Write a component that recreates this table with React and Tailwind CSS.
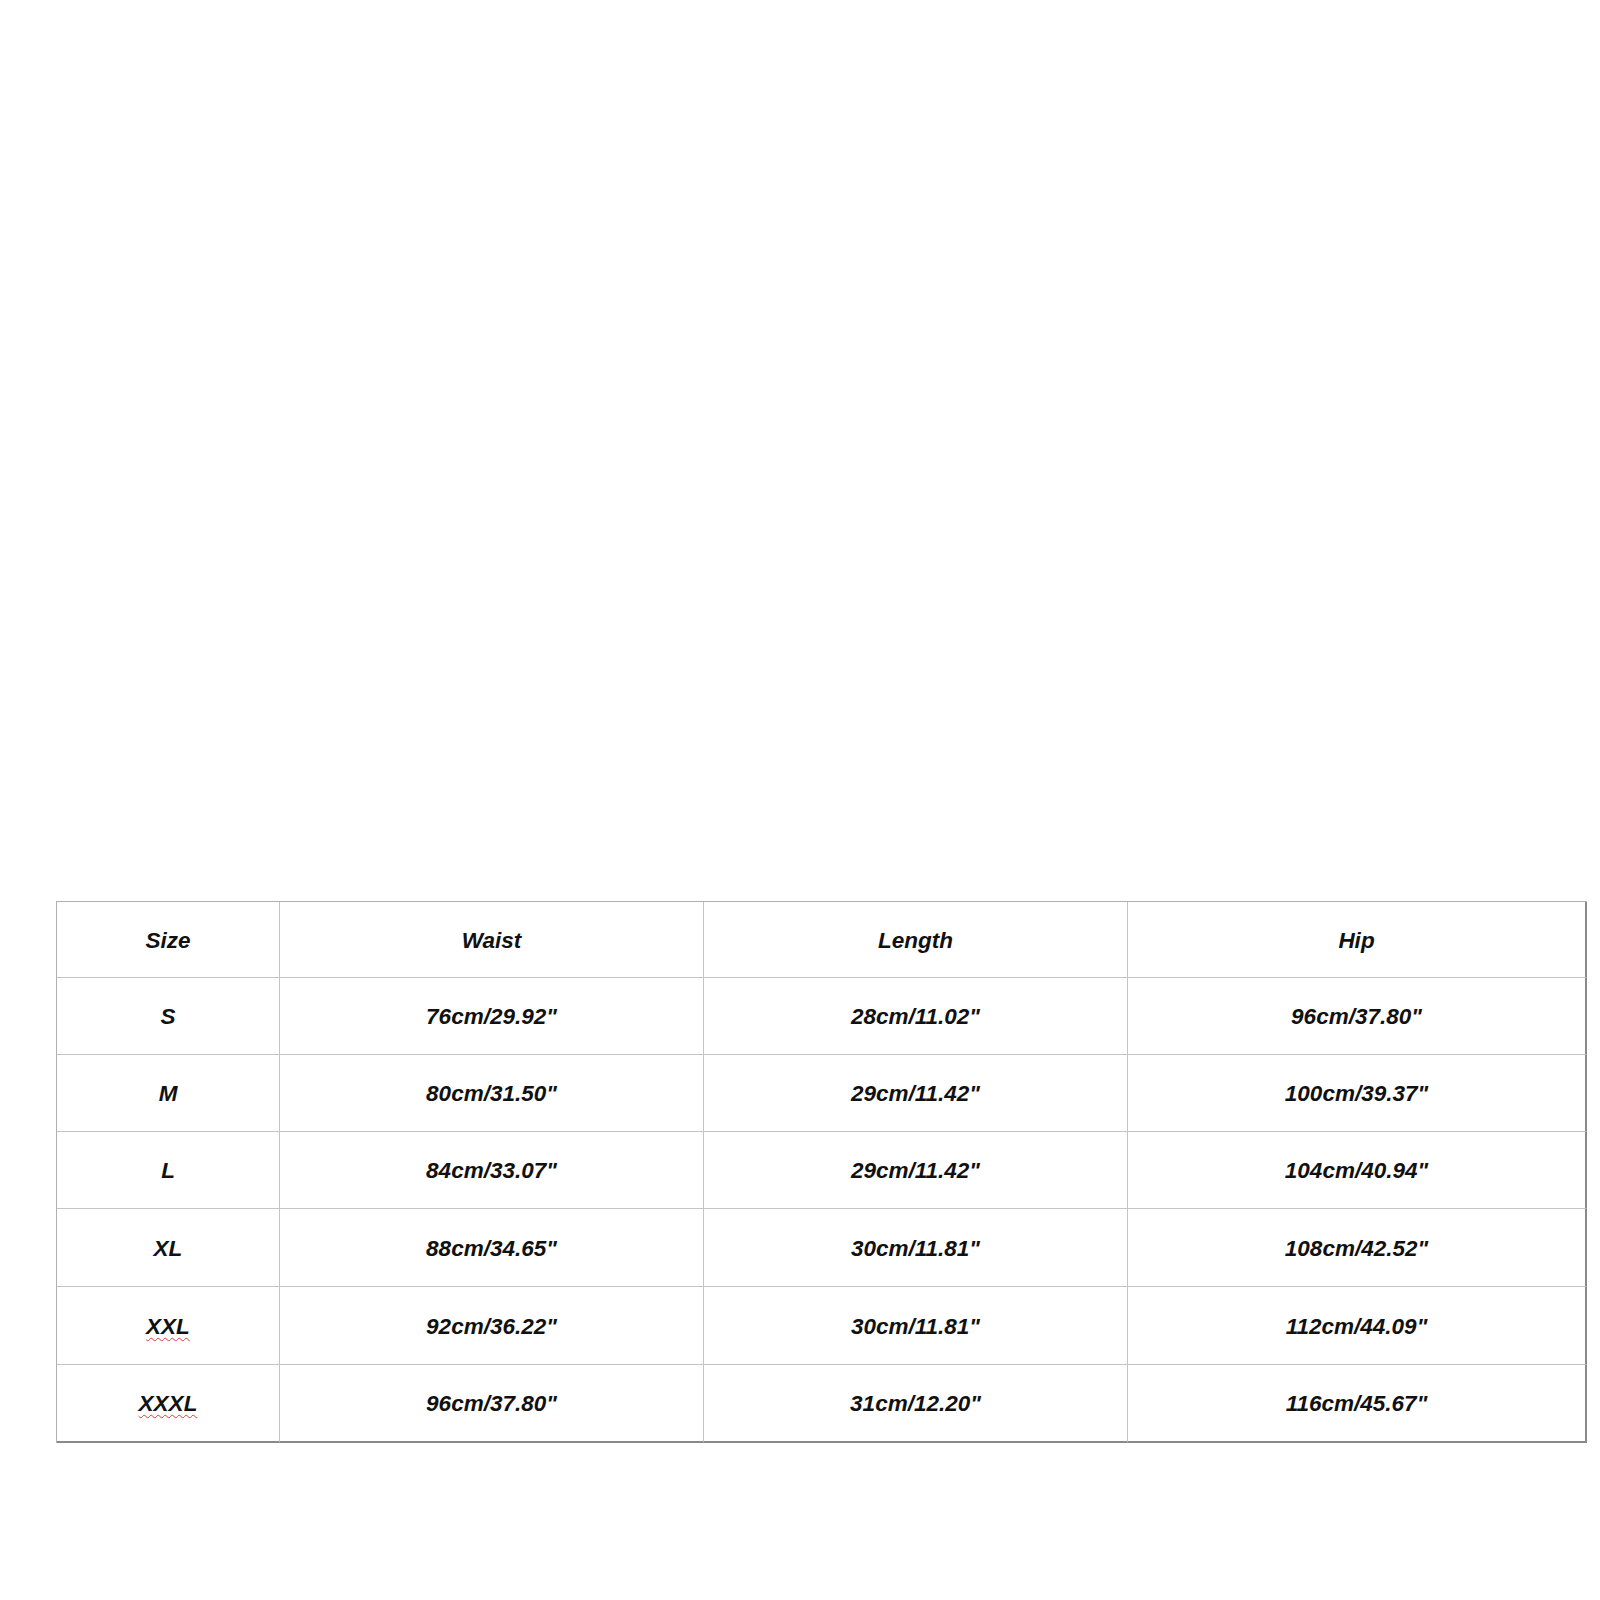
export default function App() {
  const rows = [
    ["S", "76cm/29.92\"", "28cm/11.02\"", "96cm/37.80\""],
    ["M", "80cm/31.50\"", "29cm/11.42\"", "100cm/39.37\""],
    ["L", "84cm/33.07\"", "29cm/11.42\"", "104cm/40.94\""],
    ["XL", "88cm/34.65\"", "30cm/11.81\"", "108cm/42.52\""],
    ["XXL", "92cm/36.22\"", "30cm/11.81\"", "112cm/44.09\""],
    ["XXXL", "96cm/37.80\"", "31cm/12.20\"", "116cm/45.67\""],
  ];
  const heights = ["h-[77px]", "h-[77px]", "h-[77px]", "h-[78px]", "h-[78px]", "h-[78px]"];
  const widths = ["w-[223px]", "w-[424px]", "w-[424px]", "w-[459px]"];
  const wavy = (t) =>
    t === "XXL" || t === "XXXL" ? (
      <span className="underline decoration-wavy decoration-[#d04040] decoration-1 underline-offset-[3px]">{t}</span>
    ) : (
      t
    );
  const cellCls = (ci, last) =>
    `${widths[ci]} flex items-center justify-center pt-[2px] ${
      ci === 3 ? "border-r-2 border-r-[#8a8a8a]" : "border-r border-r-[#c4c4c4]"
    } ${last ? "border-b-2 border-b-[#8a8a8a]" : "border-b border-b-[#c4c4c4]"}`;
  return (
    <div className="min-h-[1600px] w-[1600px] bg-white pt-[901px] pl-[56px]" style={{ fontFamily: '"Liberation Sans", Arial, sans-serif' }}>
      <div className="w-[1531px] border-l border-t border-[#b0b0b0] text-[22.5px] font-bold italic text-[#111]">
        <div className="flex h-[76px]">
          {["Size", "Waist", "Length", "Hip"].map((h, ci) => (
            <div key={h} className={cellCls(ci, false)}>{h}</div>
          ))}
        </div>
        {rows.map((r, ri) => (
          <div key={ri} className={`flex ${heights[ri]}`}>
            {r.map((c, ci) => (
              <div key={ci} className={cellCls(ci, ri === rows.length - 1)}>
                {ci === 0 ? wavy(c) : c}
              </div>
            ))}
          </div>
        ))}
      </div>
    </div>
  );
}
